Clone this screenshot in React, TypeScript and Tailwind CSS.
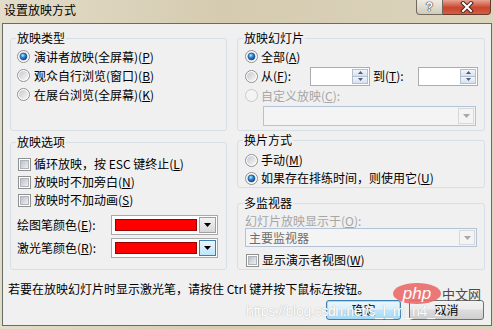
import React from "react";

const FONT = "font-['Noto_Sans_CJK_SC','Noto_Sans',sans-serif]";

function Defs() {
  return (
    <svg width="0" height="0" className="absolute">
      <defs>
        <linearGradient id="rb" x1="0" y1="0" x2="1" y2="1">
          <stop offset="0" stopColor="#c4c8ce" />
          <stop offset="1" stopColor="#f8f8f8" />
        </linearGradient>
        <radialGradient id="rd" cx="0.38" cy="0.32" r="0.75">
          <stop offset="0" stopColor="#b8eeff" />
          <stop offset="0.45" stopColor="#2a8ad8" />
          <stop offset="1" stopColor="#0a3a7e" />
        </radialGradient>
        <linearGradient id="cb" x1="0" y1="0" x2="1" y2="1">
          <stop offset="0" stopColor="#b9bdc3" />
          <stop offset="1" stopColor="#f2f2f2" />
        </linearGradient>
      </defs>
    </svg>
  );
}

function Radio({ checked = false, disabled = false }: { checked?: boolean; disabled?: boolean }) {
  return (
    <svg width="13" height="13" viewBox="0 0 13 13" className="shrink-0">
      <circle cx="6.5" cy="6.5" r="6" fill={disabled ? "#f4f4f4" : "#ffffff"} stroke={disabled ? "#c8c8c8" : "#8e8f8f"} />
      {!disabled && <circle cx="6.5" cy="6.5" r="4.6" fill="url(#rb)" />}
      {checked && <circle cx="6.5" cy="6.5" r="3.4" fill="url(#rd)" stroke="#1b3f6e" strokeWidth="0.6" />}
    </svg>
  );
}

function Check() {
  return (
    <svg width="13" height="13" viewBox="0 0 13 13" className="shrink-0">
      <rect x="0.5" y="0.5" width="12" height="12" fill="#ffffff" stroke="#8e8f8f" />
      <rect x="2.5" y="2.5" width="8" height="8" fill="url(#cb)" stroke="#aeb3b9" strokeWidth="1" />
    </svg>
  );
}

function Tri({ up = false, color = "#4b5e80", w = 7 }: { up?: boolean; color?: string; w?: number }) {
  const h = Math.ceil(w / 2);
  return (
    <svg width={w} height={h} viewBox={`0 0 ${w} ${h}`}>
      <polygon points={up ? `0,${h} ${w},${h} ${w / 2},0` : `0,0 ${w},0 ${w / 2},${h}`} fill={color} />
    </svg>
  );
}

function Spin() {
  return (
    <div className="w-[60px] h-[19px] border border-[#abadb3] bg-white flex justify-end p-[1px] shrink-0">
      <div className="w-[16px] flex flex-col">
        <div className="flex-1 border border-[#b3bfcf] bg-[linear-gradient(180deg,#f2f6fb,#d7e1ee)] flex items-center justify-center">
          <Tri up w={5} />
        </div>
        <div className="flex-1 border border-t-0 border-[#b3bfcf] bg-[linear-gradient(180deg,#f2f6fb,#d7e1ee)] flex items-center justify-center">
          <Tri w={5} />
        </div>
      </div>
    </div>
  );
}

function DisabledCombo({ w, h, text }: { w: string; h: string; text?: string }) {
  return (
    <div className={`${w} ${h} border border-[#b4c2d6] bg-[#f4f4f4] flex items-stretch p-[1px]`}>
      <div className="flex-1 flex items-center pl-[2px] text-[#6d6d6d] leading-[14px]">{text}</div>
      <div className="w-[16px] border border-[#d8d8d8] bg-[#f4f4f4] flex items-center justify-center">
        <Tri color="#a8a8a8" w={7} />
      </div>
    </div>
  );
}

function ColorCombo({ focused = false }: { focused?: boolean }) {
  return (
    <div className="w-[107px] h-[20px] border border-[#a9a9a9] bg-white flex items-center pl-[3px] pr-[1px]">
      <div className="w-[83px] h-[12px] bg-[#ff0000] border border-[#9a0000]" />
      <div
        className={`ml-[2px] w-[17px] h-[16px] border flex items-center justify-center ${
          focused
            ? "border-[#3c7fb1] bg-[linear-gradient(180deg,#eaf6fd,#bee6fd)]"
            : "border-[#a0a0a0] bg-[linear-gradient(180deg,#f2f2f2,#d8d8d8)]"
        }`}
      >
        <Tri color="#000000" w={7} />
      </div>
    </div>
  );
}

function Group({ title, h, className = "", children }: { title: string; h: string; className?: string; children: React.ReactNode }) {
  return (
    <fieldset className={`border border-[#d5dfe5] rounded-[3px] ${h} ${className} min-w-0`}>
      <legend className="ml-[5px] px-[1px] leading-[14px] text-black">{title}</legend>
      {children}
    </fieldset>
  );
}

export default function App() {
  return (
    <div
      className={`${FONT} text-[12px] text-black w-[494px] h-[329px] overflow-hidden flex flex-col relative bg-[linear-gradient(90deg,#e3dcc8,#d4cbb0_45%,#dcd4bd)]`}
    >
      <Defs />
      {/* title bar */}
      <div className="h-[23px] flex items-start shrink-0">
        <div className="pl-[4px] pt-[3px] text-[12px] leading-[14px] text-black">设置放映方式</div>
        <div className="ml-auto mr-[3px] flex">
          <div className="w-[27px] h-[15px] border border-t-0 border-[#6f6a5e] rounded-bl-[4px] bg-[linear-gradient(180deg,#efebe2,#d2cbba)] flex items-center justify-center">
            <span className="font-['Liberation_Sans',sans-serif] font-bold text-[12px] leading-[12px] text-white [text-shadow:0_0_1px_#333,0_0_1px_#333,0_0_1px_#333]">?</span>
          </div>
          <div className="w-[48px] h-[15px] border border-t-0 border-l-0 border-[#6b3a2f] rounded-br-[4px] bg-[linear-gradient(180deg,#e8a391,#c8452e_55%,#d45f40)] flex items-center justify-center">
            <svg width="14" height="12" viewBox="0 0 14 12">
              <path d="M3 2 L11 10 M11 2 L3 10" stroke="#4a2620" strokeWidth="4" strokeLinecap="square" />
              <path d="M3 2 L11 10 M11 2 L3 10" stroke="#ffffff" strokeWidth="2" strokeLinecap="square" />
            </svg>
          </div>
        </div>
      </div>

      {/* client */}
      <div className="flex-1 mx-[2px] mb-[3px] border border-[#646d66] bg-[#f0f0f0] flex flex-col relative">
        <div className="flex pl-[7px] pr-[6px] pt-[7px] gap-[10px]">
          {/* left column */}
          <div className="w-[217px] flex flex-col shrink-0">
            <Group title="放映类型" h="h-[100px]">
              <div className="pl-[6px] pt-[2px] flex flex-col">
                <div className="h-[19px] flex items-center gap-[4px] leading-[14px]">
                  <Radio checked />
                  <span>演讲者放映(全屏幕)(<u>P</u>)</span>
                </div>
                <div className="h-[19px] flex items-center gap-[4px] leading-[14px]">
                  <Radio />
                  <span>观众自行浏览(窗口)(<u>B</u>)</span>
                </div>
                <div className="h-[19px] flex items-center gap-[4px] leading-[14px]">
                  <Radio />
                  <span>在展台浏览(全屏幕)(<u>K</u>)</span>
                </div>
              </div>
            </Group>
            <Group title="放映选项" h="h-[135px]" className="mt-[4px]">
              <div className="pl-[6px] pt-[6px] flex flex-col">
                <div className="h-[18px] flex items-center gap-[3px] pl-[1px] leading-[14px]">
                  <Check />
                  <span>循环放映，按 ESC 键终止(<u>L</u>)</span>
                </div>
                <div className="h-[18px] flex items-center gap-[3px] pl-[1px] leading-[14px]">
                  <Check />
                  <span>放映时不加旁白(<u>N</u>)</span>
                </div>
                <div className="h-[18px] flex items-center gap-[3px] pl-[1px] leading-[14px]">
                  <Check />
                  <span>放映时不加动画(<u>S</u>)</span>
                </div>
                <div className="mt-[6px] h-[20px] flex items-center leading-[14px]">
                  <span className="w-[94px] shrink-0">绘图笔颜色(<u>E</u>):</span>
                  <ColorCombo />
                </div>
                <div className="mt-[3px] h-[20px] flex items-center leading-[14px]">
                  <span className="w-[94px] shrink-0">激光笔颜色(<u>R</u>):</span>
                  <ColorCombo focused />
                </div>
              </div>
            </Group>
          </div>

          {/* right column */}
          <div className="w-[248px] flex flex-col shrink-0">
            <Group title="放映幻灯片" h="h-[100px]">
              <div className="pl-[7px] pt-[2px] flex flex-col">
                <div className="h-[19px] flex items-center gap-[3px] leading-[14px]">
                  <Radio checked />
                  <span>全部(<u>A</u>)</span>
                </div>
                <div className="h-[20px] flex items-center leading-[14px]">
                  <Radio />
                  <span className="ml-[3px] w-[49px] shrink-0">从(<u>F</u>):</span>
                  <Spin />
                  <span className="ml-[3px] w-[45px] shrink-0">到(<u>T</u>):</span>
                  <Spin />
                </div>
                <div className="h-[19px] flex items-center gap-[3px] leading-[14px] text-[#a6a6a6]">
                  <Radio disabled />
                  <span>自定义放映(<u>C</u>):</span>
                </div>
                <div className="mt-[1px] ml-[18px]">
                  <DisabledCombo w="w-[213px]" h="h-[20px]" />
                </div>
              </div>
            </Group>
            <Group title="换片方式" h="h-[55px]" className="mt-[2px]">
              <div className="pl-[7px] pt-[4px] flex flex-col">
                <div className="h-[18px] flex items-center gap-[3px] leading-[14px]">
                  <Radio />
                  <span>手动(<u>M</u>)</span>
                </div>
                <div className="h-[18px] flex items-center gap-[3px] leading-[14px]">
                  <Radio checked />
                  <span>如果存在排练时间，则使用它(<u>U</u>)</span>
                </div>
              </div>
            </Group>
            <Group title="多监视器" h="h-[74px]" className="mt-[8px]">
              <div className="pl-[7px] pt-[4px] flex flex-col">
                <div className="leading-[14px] text-[#a6a6a6]">幻灯片放映显示于(<u>O</u>):</div>
                <DisabledCombo w="w-[232px]" h="h-[19px]" text="主要监视器" />
                <div className="mt-[4px] h-[18px] flex items-center gap-[3px] pl-[1px] leading-[14px]">
                  <Check />
                  <span>显示演示者视图(<u>W</u>)</span>
                </div>
              </div>
            </Group>
          </div>
        </div>

        <div className="mt-[12px] pl-[5px] leading-[14px]">若要在放映幻灯片时显示激光笔，请按住 Ctrl 键并按下鼠标左按钮。</div>

        <div className="mt-[4px] flex justify-end pr-[7px] gap-[8px]">
          <div className="w-[75px] h-[20px] rounded-[3px] border border-[#3c7fb1] bg-[linear-gradient(180deg,#eaf6fd_0%,#d9f0fc_45%,#bee6fd_50%,#a7d9f5_100%)] shadow-[inset_0_0_0_1px_#9fdcfb] flex items-center justify-center leading-[14px]">
            确定
          </div>
          <div className="w-[75px] h-[20px] rounded-[3px] border border-[#707070] bg-[linear-gradient(180deg,#f2f2f2_0%,#ebebeb_45%,#dddddd_50%,#cfcfcf_100%)] flex items-center justify-center leading-[14px]">
            取消
          </div>
        </div>

        {/* watermark overlays */}
        <div className="absolute left-[243px] top-[279px] font-['Liberation_Sans',sans-serif] text-[14px] leading-[16px] tracking-[-0.3px] text-white [text-shadow:0_0_1px_#b8b8b8,0_0_1px_#c8c8c8] whitespace-nowrap pointer-events-none">
          https://blog.csdn.net/s_l_m_n4_2
        </div>
        <div className="absolute left-[390px] top-[259px] w-[48px] h-[21px] rounded-[50%] bg-[#ec6a6a] opacity-90 flex items-center justify-center pointer-events-none">
          <span className="font-['Liberation_Sans',sans-serif] italic text-[17px] leading-[17px] text-white">php</span>
        </div>
        <div className="absolute left-[439px] top-[263px] text-[13px] leading-[14px] text-[#4a4a4a] pointer-events-none">中文网</div>
      </div>
    </div>
  );
}
